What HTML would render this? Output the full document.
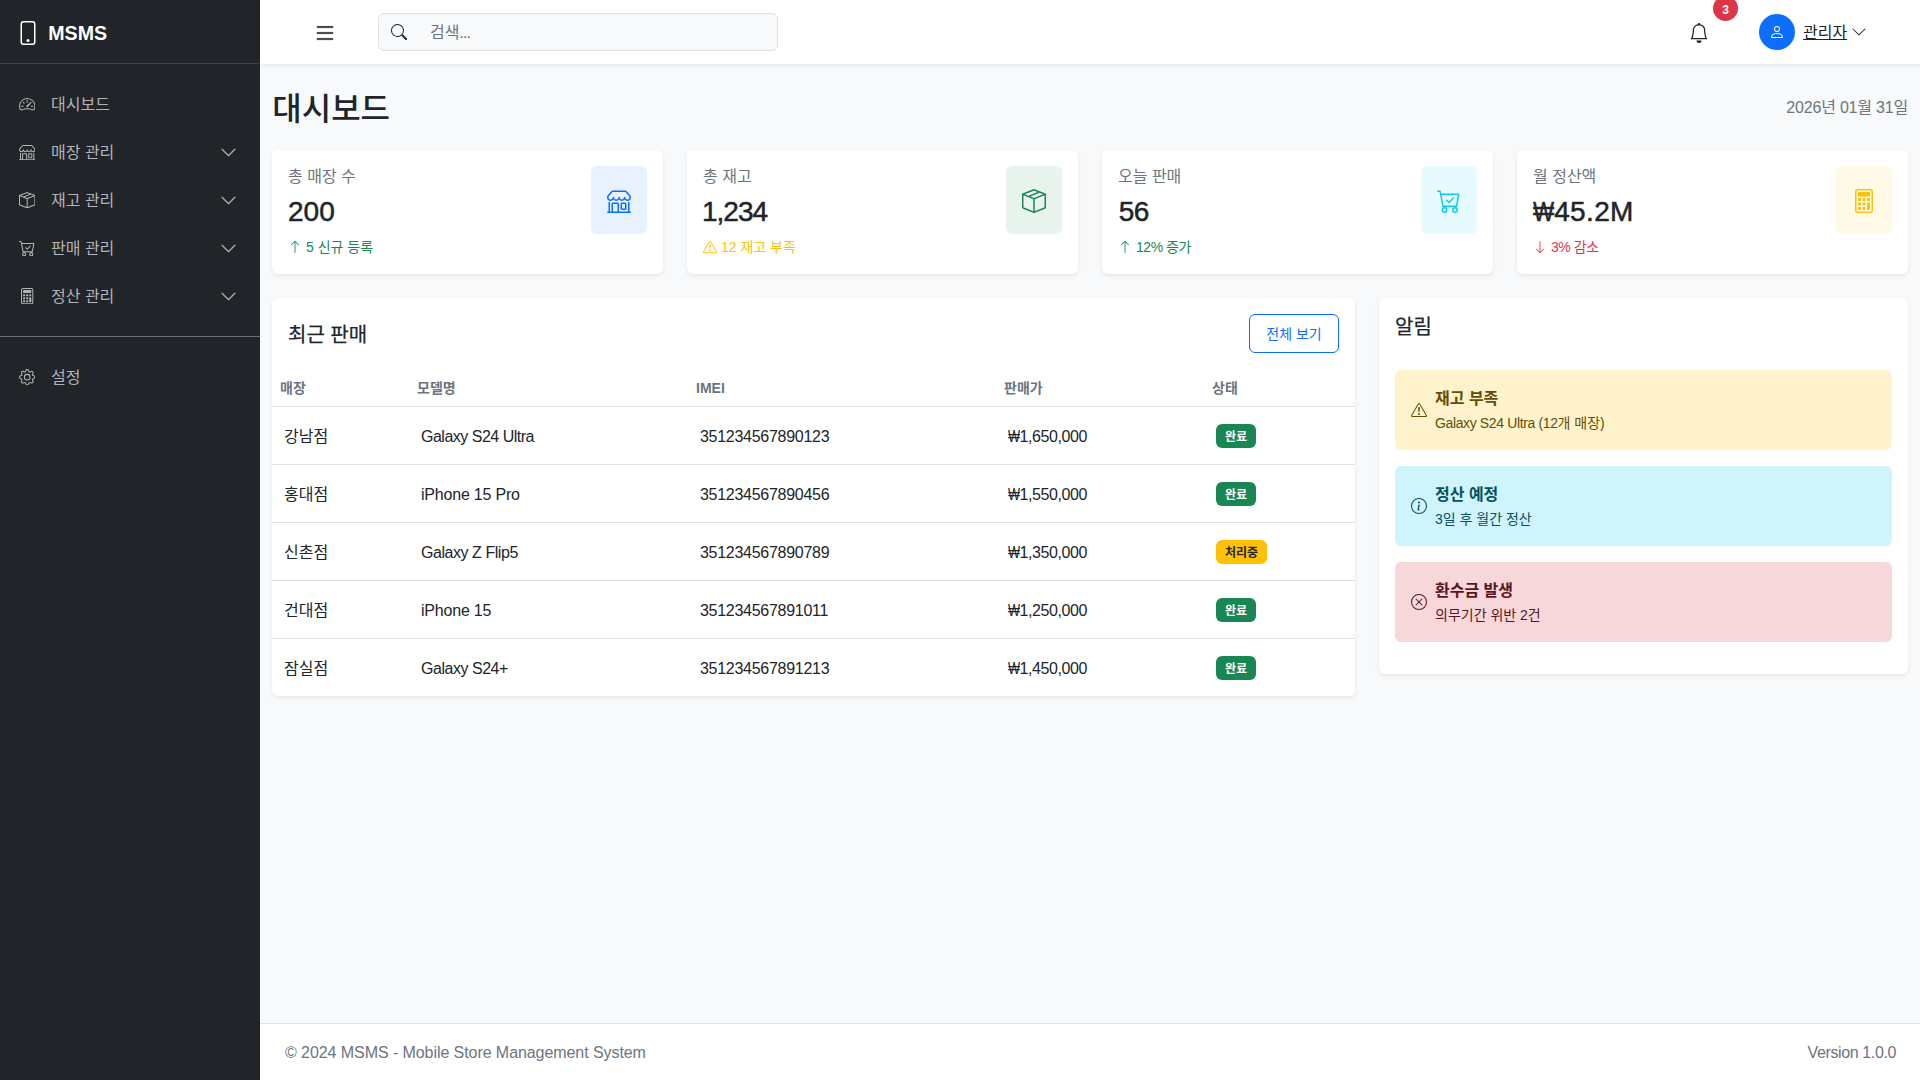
<!DOCTYPE html>
<html lang="ko">
<head>
<meta charset="utf-8">
<title>MSMS - 대시보드</title>
<style>
*{box-sizing:border-box;margin:0;padding:0}
html,body{width:1920px;height:1080px;overflow:hidden}
body{font-family:"Liberation Sans","Noto Sans CJK KR",sans-serif;font-size:16px;line-height:1.5;color:#212529;background:#f8f9fa;position:relative}
svg{display:block;fill:currentColor}
.abs{position:absolute}
.t{position:absolute;white-space:nowrap;line-height:1}
.t,.nav span,.row>span,.alert b,.alert small,.th,.btn{margin-top:.0675em}
.badge i{display:block;font-style:normal;position:relative;top:.0675em}
/* sidebar */
#sidebar{position:absolute;left:0;top:0;width:260px;height:1080px;background:#212529;color:#fff}
#sidebar .hr{position:absolute;left:0;width:260px;height:1px;background:#3e4044}
.nav{position:absolute;left:0;width:260px;height:48px;color:#b2b4b7}
.nav svg.ic{position:absolute;left:19px;top:16px;width:16.4px;height:16.4px}
.nav span{position:absolute;left:51px;top:12px;font-size:16px;line-height:24px;white-space:nowrap}
.nav svg.ch{position:absolute;left:219.5px;top:15.5px;width:17px;height:17px;stroke:currentColor;stroke-width:.35}
/* topbar */
#topbar{position:absolute;left:260px;top:0;width:1660px;height:64px;background:#fff;box-shadow:0 2px 4px rgba(0,0,0,.075)}
#search{position:absolute;left:118px;top:13px;width:400px;height:38px;background:#f8f9fa;border:1px solid #dee2e6;border-radius:6px}
/* cards */
.card{position:absolute;background:#fff;border-radius:6px;box-shadow:0 2px 4px rgba(0,0,0,.075)}
.stat{top:150px;width:391px;height:124px}
.stat .lbl{left:16px;top:16px;font-size:16px;line-height:20px;color:#6c757d}
.stat .num{left:16px;top:42.3px;font-size:28px;line-height:36px;font-weight:normal;-webkit-text-stroke:.5px #212529;color:#212529}
.stat .sub{left:16px;top:86px;font-size:14px;line-height:20px}
.stat .sub svg{position:absolute;left:0;top:3px;width:14px;height:14px}
.stat .sub span{margin-left:18px}
.stat .ib{position:absolute;left:319px;top:16px;width:56px;height:68px;border-radius:6px}
.stat .ib svg{position:absolute;left:16px;top:23px;width:24px;height:24px}
.w{display:inline-block;transform:scaleX(.8);transform-origin:0 50%;margin-right:-.2em}
/* table */
.th{position:absolute;top:79px;font-size:14px;line-height:20px;font-weight:bold;color:#6c757d;white-space:nowrap}
.row{position:absolute;left:0;width:1083px;height:58px;border-top:1px solid #dee2e6}
.row>span{position:absolute;top:17px;line-height:24px;font-size:16px;white-space:nowrap}
.row>span.l{font-size:16px;letter-spacing:-.28px}
.row>span.p{letter-spacing:-.4px}
.row>span.m0{letter-spacing:-.5px}
.row>span.m2{letter-spacing:-.45px}
.row>span.m4{letter-spacing:-.47px}
.row>span.m1,.row>span.m3{letter-spacing:-.2px}
.badge{position:absolute;left:944px;top:17px;height:24px;border-radius:6px;font-size:12px;font-weight:bold;line-height:24px;text-align:center;color:#fff;white-space:nowrap}
/* alerts */
.alert{position:absolute;left:16px;width:497px;height:80px;border-radius:6px}
.alert svg{position:absolute;left:16px;top:32px;width:16px;height:16px}
.alert b{position:absolute;left:40px;top:16px;font-size:16px;line-height:24px;white-space:nowrap}
.alert small{position:absolute;left:40px;top:41.8px;font-size:14px;line-height:21px;white-space:nowrap}
#footer{position:absolute;left:260px;top:1023px;width:1660px;height:57px;background:#fff;border-top:1px solid #dee2e6;color:#6c757d}
</style>
</head>
<body>
<svg width="0" height="0" style="position:absolute">
<defs>
<symbol id="i-phone" viewBox="0 0 16 16"><path d="M11 1a1 1 0 0 1 1 1v12a1 1 0 0 1-1 1H5a1 1 0 0 1-1-1V2a1 1 0 0 1 1-1zM5 0a2 2 0 0 0-2 2v12a2 2 0 0 0 2 2h6a2 2 0 0 0 2-2V2a2 2 0 0 0-2-2z"/><path d="M8 14a1 1 0 1 0 0-2 1 1 0 0 0 0 2"/></symbol>
<symbol id="i-speed" viewBox="0 0 16 16"><path d="M8 4a.5.5 0 0 1 .5.5V6a.5.5 0 0 1-1 0V4.5A.5.5 0 0 1 8 4M3.732 5.732a.5.5 0 0 1 .707 0l.915.914a.5.5 0 1 1-.708.708l-.914-.915a.5.5 0 0 1 0-.707M2 10a.5.5 0 0 1 .5-.5h1.586a.5.5 0 0 1 0 1H2.5A.5.5 0 0 1 2 10m9.5 0a.5.5 0 0 1 .5-.5h1.5a.5.5 0 0 1 0 1H12a.5.5 0 0 1-.5-.5m.754-4.246a.39.39 0 0 0-.527-.02L7.547 9.31a.91.91 0 1 0 1.302 1.258l3.434-4.297a.39.39 0 0 0-.029-.518z"/><path fill-rule="evenodd" d="M0 10a8 8 0 1 1 15.547 2.661c-.442 1.253-1.845 1.602-2.932 1.25C11.309 13.488 9.475 13 8 13c-1.474 0-3.31.488-4.615.911-1.087.352-2.49.003-2.932-1.25A8 8 0 0 1 0 10m8-7a7 7 0 0 0-6.603 9.329c.203.575.923.876 1.68.63C4.397 12.533 6.358 12 8 12s3.604.532 4.923.96c.757.245 1.477-.056 1.68-.631A7 7 0 0 0 8 3"/></symbol>
<symbol id="i-shop" viewBox="0 0 16 16"><path d="M2.97 1.35A1 1 0 0 1 3.73 1h8.54a1 1 0 0 1 .76.35l2.609 3.044A1.5 1.5 0 0 1 16 5.37v.255a2.375 2.375 0 0 1-4.25 1.458A2.37 2.37 0 0 1 9.875 8 2.37 2.37 0 0 1 8 7.083 2.37 2.37 0 0 1 6.125 8a2.37 2.37 0 0 1-1.875-.917A2.375 2.375 0 0 1 0 5.625V5.37a1.5 1.5 0 0 1 .361-.976zm1.78 4.275a1.375 1.375 0 0 0 2.75 0 .5.5 0 0 1 1 0 1.375 1.375 0 0 0 2.75 0 .5.5 0 0 1 1 0 1.375 1.375 0 1 0 2.75 0V5.37a.5.5 0 0 0-.12-.325L12.27 2H3.73L1.12 5.045A.5.5 0 0 0 1 5.37v.255a1.375 1.375 0 0 0 2.75 0 .5.5 0 0 1 1 0M1.5 8.5A.5.5 0 0 1 2 9v6h1v-5a1 1 0 0 1 1-1h3a1 1 0 0 1 1 1v5h6V9a.5.5 0 0 1 1 0v6h.5a.5.5 0 0 1 0 1H.5a.5.5 0 0 1 0-1H1V9a.5.5 0 0 1 .5-.5M4 15h3v-5H4zm5-5a1 1 0 0 1 1-1h2a1 1 0 0 1 1 1v3a1 1 0 0 1-1 1h-2a1 1 0 0 1-1-1zm3 0h-2v3h2z"/></symbol>
<symbol id="i-box" viewBox="0 0 16 16"><path d="M8.186 1.113a.5.5 0 0 0-.372 0L1.846 3.5l2.404.961L10.404 2zm3.564 1.426L5.596 5 8 5.961 14.154 3.5zm3.25 1.7-6.5 2.6v7.922l6.5-2.6V4.24zM7.5 14.762V6.838L1 4.239v7.923zM7.443.184a1.5 1.5 0 0 1 1.114 0l7.129 2.852A.5.5 0 0 1 16 3.5v8.662a1 1 0 0 1-.629.928l-7.185 2.874a.5.5 0 0 1-.372 0L.63 13.09a1 1 0 0 1-.63-.928V3.5a.5.5 0 0 1 .314-.464z"/></symbol>
<symbol id="i-cart" viewBox="0 0 16 16"><path d="M11.354 6.354a.5.5 0 0 0-.708-.708L8 8.293 6.854 7.146a.5.5 0 1 0-.708.708l1.5 1.5a.5.5 0 0 0 .708 0z"/><path d="M.5 1a.5.5 0 0 0 0 1h1.11l.401 1.607 1.498 7.985A.5.5 0 0 0 4 12h1a2 2 0 1 0 0 4 2 2 0 0 0 0-4h7a2 2 0 1 0 0 4 2 2 0 0 0 0-4h1a.5.5 0 0 0 .491-.408l1.5-8A.5.5 0 0 0 14.5 3H2.89l-.405-1.621A.5.5 0 0 0 2 1zm3.915 10L3.102 4h10.796l-1.313 7zM6 14a1 1 0 1 1-2 0 1 1 0 0 1 2 0m7 0a1 1 0 1 1-2 0 1 1 0 0 1 2 0"/></symbol>
<symbol id="i-calc" viewBox="0 0 16 16"><path d="M12 1a1 1 0 0 1 1 1v12a1 1 0 0 1-1 1H4a1 1 0 0 1-1-1V2a1 1 0 0 1 1-1zM4 0a2 2 0 0 0-2 2v12a2 2 0 0 0 2 2h8a2 2 0 0 0 2-2V2a2 2 0 0 0-2-2z"/><path d="M4 2.5a.5.5 0 0 1 .5-.5h7a.5.5 0 0 1 .5.5v2a.5.5 0 0 1-.5.5h-7a.5.5 0 0 1-.5-.5zm0 4a.5.5 0 0 1 .5-.5h1a.5.5 0 0 1 .5.5v1a.5.5 0 0 1-.5.5h-1a.5.5 0 0 1-.5-.5zm0 3a.5.5 0 0 1 .5-.5h1a.5.5 0 0 1 .5.5v1a.5.5 0 0 1-.5.5h-1a.5.5 0 0 1-.5-.5zm0 3a.5.5 0 0 1 .5-.5h1a.5.5 0 0 1 .5.5v1a.5.5 0 0 1-.5.5h-1a.5.5 0 0 1-.5-.5zm3-6a.5.5 0 0 1 .5-.5h1a.5.5 0 0 1 .5.5v1a.5.5 0 0 1-.5.5h-1a.5.5 0 0 1-.5-.5zm0 3a.5.5 0 0 1 .5-.5h1a.5.5 0 0 1 .5.5v1a.5.5 0 0 1-.5.5h-1a.5.5 0 0 1-.5-.5zm0 3a.5.5 0 0 1 .5-.5h1a.5.5 0 0 1 .5.5v1a.5.5 0 0 1-.5.5h-1a.5.5 0 0 1-.5-.5zm3-6a.5.5 0 0 1 .5-.5h1a.5.5 0 0 1 .5.5v1a.5.5 0 0 1-.5.5h-1a.5.5 0 0 1-.5-.5zm0 3a.5.5 0 0 1 .5-.5h1a.5.5 0 0 1 .5.5v4a.5.5 0 0 1-.5.5h-1a.5.5 0 0 1-.5-.5z"/></symbol>
<symbol id="i-gear" viewBox="0 0 16 16"><path d="M8 4.754a3.246 3.246 0 1 0 0 6.492 3.246 3.246 0 0 0 0-6.492M5.754 8a2.246 2.246 0 1 1 4.492 0 2.246 2.246 0 0 1-4.492 0"/><path d="M9.796 1.343c-.527-1.79-3.065-1.79-3.592 0l-.094.319a.873.873 0 0 1-1.255.52l-.292-.16c-1.64-.892-3.433.902-2.54 2.541l.159.292a.873.873 0 0 1-.52 1.255l-.319.094c-1.79.527-1.79 3.065 0 3.592l.319.094a.873.873 0 0 1 .52 1.255l-.16.292c-.892 1.64.901 3.434 2.541 2.54l.292-.159a.873.873 0 0 1 1.255.52l.094.319c.527 1.79 3.065 1.79 3.592 0l.094-.319a.873.873 0 0 1 1.255-.52l.292.16c1.64.893 3.434-.902 2.54-2.541l-.159-.292a.873.873 0 0 1 .52-1.255l.319-.094c1.79-.527 1.79-3.065 0-3.592l-.319-.094a.873.873 0 0 1-.52-1.255l.16-.292c.893-1.64-.902-3.433-2.541-2.54l-.292.159a.873.873 0 0 1-1.255-.52zm-2.633.283c.246-.835 1.428-.835 1.674 0l.094.319a1.873 1.873 0 0 0 2.693 1.115l.291-.16c.764-.415 1.6.42 1.184 1.185l-.159.292a1.873 1.873 0 0 0 1.116 2.692l.318.094c.835.246.835 1.428 0 1.674l-.319.094a1.873 1.873 0 0 0-1.115 2.693l.16.291c.415.764-.42 1.6-1.185 1.184l-.291-.159a1.873 1.873 0 0 0-2.693 1.116l-.094.318c-.246.835-1.428.835-1.674 0l-.094-.319a1.873 1.873 0 0 0-2.692-1.115l-.292.16c-.764.415-1.6-.42-1.184-1.185l.159-.291A1.873 1.873 0 0 0 1.945 8.93l-.319-.094c-.835-.246-.835-1.428 0-1.674l.319-.094A1.873 1.873 0 0 0 3.06 4.377l-.16-.292c-.415-.764.42-1.6 1.185-1.184l.292.159a1.873 1.873 0 0 0 2.692-1.115z"/></symbol>
<symbol id="i-chev" viewBox="0 0 16 16"><path fill-rule="evenodd" d="M1.646 4.646a.5.5 0 0 1 .708 0L8 10.293l5.646-5.647a.5.5 0 0 1 .708.708l-6 6a.5.5 0 0 1-.708 0l-6-6a.5.5 0 0 1 0-.708"/></symbol>
<symbol id="i-list" viewBox="0 0 16 16"><path fill-rule="evenodd" d="M2.5 12a.5.5 0 0 1 .5-.5h10a.5.5 0 0 1 0 1H3a.5.5 0 0 1-.5-.5m0-4a.5.5 0 0 1 .5-.5h10a.5.5 0 0 1 0 1H3a.5.5 0 0 1-.5-.5m0-4a.5.5 0 0 1 .5-.5h10a.5.5 0 0 1 0 1H3a.5.5 0 0 1-.5-.5"/></symbol>
<symbol id="i-search" viewBox="0 0 16 16"><path d="M11.742 10.344a6.5 6.5 0 1 0-1.397 1.398h-.001q.044.06.098.115l3.85 3.85a1 1 0 0 0 1.415-1.414l-3.85-3.85a1 1 0 0 0-.115-.1zM12 6.5a5.5 5.5 0 1 1-11 0 5.5 5.5 0 0 1 11 0"/></symbol>
<symbol id="i-bell" viewBox="0 0 16 16"><path d="M8 16a2 2 0 0 0 2-2H6a2 2 0 0 0 2 2M8 1.918l-.797.161A4 4 0 0 0 4 6c0 .628-.134 2.197-.459 3.742-.16.767-.376 1.566-.663 2.258h10.244c-.287-.692-.502-1.49-.663-2.258C12.134 8.197 12 6.628 12 6a4 4 0 0 0-3.203-3.92zM14.22 12c.223.447.481.801.78 1H1c.299-.199.557-.553.78-1C2.68 10.200 3 6.880 3 6c0-2.420 1.720-4.440 4.005-4.901a1 1 0 1 1 1.990 0A5 5 0 0 1 13 6c0 .880.320 4.200 1.220 6"/></symbol>
<symbol id="i-person" viewBox="0 0 16 16"><path d="M8 8a3 3 0 1 0 0-6 3 3 0 0 0 0 6m2-3a2 2 0 1 1-4 0 2 2 0 0 1 4 0m4 8c0 1-1 1-1 1H3s-1 0-1-1 1-4 6-4 6 3 6 4m-1-.004c-.001-.246-.154-.986-.832-1.664C11.516 10.680 10.289 10 8 10s-3.516.680-4.168 1.332c-.678.678-.830 1.418-.832 1.664z"/></symbol>
<symbol id="i-up" viewBox="0 0 16 16"><path fill-rule="evenodd" d="M8 15a.5.5 0 0 0 .5-.5V2.707l3.146 3.147a.5.5 0 0 0 .708-.708l-4-4a.5.5 0 0 0-.708 0l-4 4a.5.5 0 1 0 .708.708L7.500 2.707V14.500a.5.5 0 0 0 .5.5"/></symbol>
<symbol id="i-down" viewBox="0 0 16 16"><path fill-rule="evenodd" d="M8 1a.5.5 0 0 1 .5.5v11.793l3.146-3.147a.5.5 0 0 1 .708.708l-4 4a.5.5 0 0 1-.708 0l-4-4a.5.5 0 0 1 .708-.708L7.500 13.293V1.500A.5.5 0 0 1 8 1"/></symbol>
<symbol id="i-warn" viewBox="0 0 16 16"><path d="M7.938 2.016A.13.13 0 0 1 8.002 2a.13.13 0 0 1 .063.016.15.15 0 0 1 .054.057l6.857 11.667c.036.060.035.124.002.183a.2.2 0 0 1-.054.060.1.1 0 0 1-.066.017H1.146a.1.1 0 0 1-.066-.017.2.2 0 0 1-.054-.060.18.18 0 0 1 .002-.183L7.884 2.073a.15.15 0 0 1 .054-.057m1.044-.450a1.130 1.130 0 0 0-1.960 0L.165 13.233c-.457.778.091 1.767.980 1.767h13.713c.889 0 1.438-.990.980-1.767z"/><path d="M7.002 12a1 1 0 1 1 2 0 1 1 0 0 1-2 0M7.100 5.995a.905.905 0 1 1 1.800 0l-.350 3.507a.552.552 0 0 1-1.100 0z"/></symbol>
<symbol id="i-info" viewBox="0 0 16 16"><path d="M8 15A7 7 0 1 1 8 1a7 7 0 0 1 0 14m0 1A8 8 0 1 0 8 0a8 8 0 0 0 0 16"/><path d="m8.930 6.588-2.290.287-.082.380.450.083c.294.070.352.176.288.469l-.738 3.468c-.194.897.105 1.319.808 1.319.545 0 1.178-.252 1.465-.598l.088-.416c-.200.176-.492.246-.686.246-.275 0-.375-.193-.304-.533zM9 4.500a1 1 0 1 1-2 0 1 1 0 0 1 2 0"/></symbol>
<symbol id="i-x" viewBox="0 0 16 16"><path d="M8 15A7 7 0 1 1 8 1a7 7 0 0 1 0 14m0 1A8 8 0 1 0 8 0a8 8 0 0 0 0 16"/><path d="M4.646 4.646a.5.5 0 0 1 .708 0L8 7.293l2.646-2.647a.5.5 0 0 1 .708.708L8.707 8l2.647 2.646a.5.5 0 0 1-.708.708L8 8.707l-2.646 2.647a.5.5 0 0 1-.708-.708L7.293 8 4.646 5.354a.5.5 0 0 1 0-.708"/></symbol>
</defs>
</svg>

<!-- SIDEBAR -->
<div id="sidebar">
  <svg class="abs" style="left:16px;top:21px;width:24px;height:24px"><use href="#i-phone"/></svg>
  <div class="t" style="left:48.3px;top:17px;font-size:19.6px;line-height:30px;font-weight:bold">MSMS</div>
  <div class="hr" style="top:63px"></div>
  <div class="nav" style="top:80px"><svg class="ic"><use href="#i-speed"/></svg><span>대시보드</span></div>
  <div class="nav" style="top:128px"><svg class="ic"><use href="#i-shop"/></svg><span>매장 관리</span><svg class="ch"><use href="#i-chev"/></svg></div>
  <div class="nav" style="top:176px"><svg class="ic"><use href="#i-box"/></svg><span>재고 관리</span><svg class="ch"><use href="#i-chev"/></svg></div>
  <div class="nav" style="top:224px"><svg class="ic"><use href="#i-cart"/></svg><span>판매 관리</span><svg class="ch"><use href="#i-chev"/></svg></div>
  <div class="nav" style="top:272px"><svg class="ic"><use href="#i-calc"/></svg><span>정산 관리</span><svg class="ch"><use href="#i-chev"/></svg></div>
  <div class="hr" style="top:336px;background:#6c7075"></div>
  <div class="nav" style="top:353px"><svg class="ic"><use href="#i-gear"/></svg><span>설정</span></div>
</div>

<!-- TOPBAR -->
<div id="topbar">
  <svg class="abs" style="left:52.5px;top:21px;width:24px;height:24px;color:#212529;stroke:#212529;stroke-width:.2"><use href="#i-list"/></svg>
  <div id="search">
    <svg class="abs" style="left:12px;top:10px;width:16px;height:16px;color:#212529"><use href="#i-search"/></svg>
    <div class="t" style="left:51px;top:6px;font-size:16px;line-height:24px;color:#6c757d">검색<span style="letter-spacing:-.9px">...</span></div>
  </div>
  <svg class="abs" style="left:1429px;top:23px;width:20px;height:20px;color:#212529"><use href="#i-bell"/></svg>
  <div class="abs" style="left:1453px;top:-4px;width:25px;height:25px;border-radius:13px;background:#dc3545"></div><div class="t" style="left:1453px;top:-4px;width:25px;color:#fff;font-size:12px;font-weight:bold;line-height:26.4px;text-align:center">3</div>
  <div class="abs" style="left:1499px;top:14px;width:36px;height:36px;border-radius:18px;background:#0d6efd;color:#fff"><svg class="abs" style="left:10px;top:10px;width:16px;height:16px"><use href="#i-person"/></svg></div>
  <div class="t" style="left:1543px;top:20px;font-size:16px;line-height:24px;color:#212529;text-decoration:underline">관리자</div>
  <svg class="abs" style="left:1591.4px;top:24px;width:16px;height:16px;color:#212529"><use href="#i-chev"/></svg>
</div>

<!-- PAGE HEADER -->
<div class="t" style="left:272.3px;top:87px;font-size:32px;line-height:40px;font-weight:500;color:#212529">대시보드</div>
<div class="t" style="right:12px;top:95px;font-size:16px;line-height:24px;color:#6c757d;letter-spacing:-.2px">2026년 01월 31일</div>

<!-- STAT CARDS -->
<div class="card stat" style="left:272px">
  <div class="t lbl">총 매장 수</div>
  <div class="t num">200</div>
  <div class="t sub" style="color:#198754"><svg><use href="#i-up"/></svg><span>5 신규 등록</span></div>
  <div class="ib" style="background:#e7f1ff;color:#0d6efd"><svg><use href="#i-shop"/></svg></div>
</div>
<div class="card stat" style="left:687px">
  <div class="t lbl">총 재고</div>
  <div class="t num" style="letter-spacing:-1px;left:15px">1,234</div>
  <div class="t sub" style="color:#ffc107"><svg><use href="#i-warn"/></svg><span>12 재고 부족</span></div>
  <div class="ib" style="background:#e8f3ee;color:#198754"><svg><use href="#i-box"/></svg></div>
</div>
<div class="card stat" style="left:1102px">
  <div class="t lbl">오늘 판매</div>
  <div class="t num" style="left:16.7px;letter-spacing:-.4px">56</div>
  <div class="t sub" style="color:#198754"><svg><use href="#i-up"/></svg><span style="letter-spacing:-.45px">12% 증가</span></div>
  <div class="ib" style="background:#e7fafe;color:#0dcaf0"><svg><use href="#i-cart"/></svg></div>
</div>
<div class="card stat" style="left:1517px">
  <div class="t lbl">월 정산액</div>
  <div class="t num" style="letter-spacing:.35px"><span class="w">₩</span>45.2M</div>
  <div class="t sub" style="color:#dc3545"><svg><use href="#i-down"/></svg><span style="letter-spacing:-.45px">3% 감소</span></div>
  <div class="ib" style="background:#fff9e6;color:#ffc107"><svg><use href="#i-calc"/></svg></div>
</div>

<!-- RECENT SALES -->
<div class="card" style="left:272px;top:298px;width:1083px;height:398px;overflow:hidden">
  <div class="t" style="left:16px;top:21px;font-size:20px;line-height:30px;color:#212529;-webkit-text-stroke:.25px #212529">최근 판매</div>
  <div class="abs" style="left:977px;top:16px;width:90px;height:39px;border:1px solid #0d6efd;border-radius:6px"></div><div class="t btn" style="left:977px;top:16px;width:90px;color:#0d6efd;font-size:14px;line-height:39px;text-align:center">전체 보기</div>
  <div class="th" style="left:8px">매장</div>
  <div class="th" style="left:145px">모델명</div>
  <div class="th" style="left:424px">IMEI</div>
  <div class="th" style="left:732px">판매가</div>
  <div class="th" style="left:940px">상태</div>
  <div class="row" style="top:108px"><span style="left:12px">강남점</span><span class="l m0" style="left:149px">Galaxy S24 Ultra</span><span class="l" style="left:428px">351234567890123</span><span class="l p" style="left:736px"><span class="w">₩</span>1,650,000</span><div class="badge" style="width:40px;background:#198754"><i>완료</i></div></div>
  <div class="row" style="top:166px"><span style="left:12px">홍대점</span><span class="l m1" style="left:149px">iPhone 15 Pro</span><span class="l" style="left:428px">351234567890456</span><span class="l p" style="left:736px"><span class="w">₩</span>1,550,000</span><div class="badge" style="width:40px;background:#198754"><i>완료</i></div></div>
  <div class="row" style="top:224px"><span style="left:12px">신촌점</span><span class="l m2" style="left:149px">Galaxy Z Flip5</span><span class="l" style="left:428px">351234567890789</span><span class="l p" style="left:736px"><span class="w">₩</span>1,350,000</span><div class="badge" style="width:51px;background:#ffc107;color:#212529"><i>처리중</i></div></div>
  <div class="row" style="top:282px"><span style="left:12px">건대점</span><span class="l m3" style="left:149px">iPhone 15</span><span class="l" style="left:428px">351234567891011</span><span class="l p" style="left:736px"><span class="w">₩</span>1,250,000</span><div class="badge" style="width:40px;background:#198754"><i>완료</i></div></div>
  <div class="row" style="top:340px"><span style="left:12px">잠실점</span><span class="l m4" style="left:149px">Galaxy S24+</span><span class="l" style="left:428px">351234567891213</span><span class="l p" style="left:736px"><span class="w">₩</span>1,450,000</span><div class="badge" style="width:40px;background:#198754"><i>완료</i></div></div>
</div>

<!-- ALERTS -->
<div class="card" style="left:1379px;top:298px;width:529px;height:376px">
  <div class="t" style="left:16px;top:13px;font-size:20px;line-height:30px;color:#212529;-webkit-text-stroke:.25px #212529">알림</div>
  <div class="alert" style="top:72px;background:#fff3cd;color:#664d03"><svg><use href="#i-warn"/></svg><b>재고 부족</b><small><span style="letter-spacing:-.37px">Galaxy S24 Ultra (12</span>개 매장)</small></div>
  <div class="alert" style="top:168px;background:#cff4fc;color:#055160"><svg><use href="#i-info"/></svg><b>정산 예정</b><small>3일 후 월간 정산</small></div>
  <div class="alert" style="top:264px;background:#f8d7da;color:#58151c"><svg><use href="#i-x"/></svg><b>환수금 발생</b><small>의무기간 위반 2건</small></div>
</div>

<!-- FOOTER -->
<div id="footer">
  <div class="t" style="left:25px;top:16px;font-size:16px;line-height:24px;letter-spacing:-.07px">© 2024 MSMS - Mobile Store Management System</div>
  <div class="t" style="right:24px;top:16px;font-size:16px;line-height:24px;letter-spacing:-.38px">Version 1.0.0</div>
</div>
</body>
</html>
